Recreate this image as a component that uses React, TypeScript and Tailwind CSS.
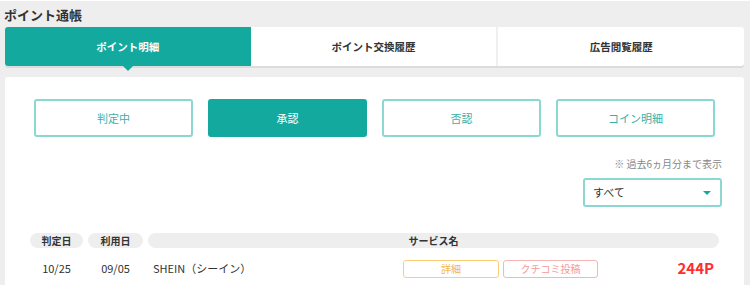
import React from 'react';

const font = { fontFamily: "'Noto Sans CJK JP', 'Noto Sans', sans-serif" };

const tabs = ['ポイント明細', 'ポイント交換履歴', '広告閲覧履歴'];
const filters = ['判定中', '承認', '否認', 'コイン明細'];

export default function App() {
  return (
    <div
      className="w-[750px] h-[285px] overflow-hidden bg-[#eeeeee] border-t border-white text-[#333]"
      style={font}
    >
      {/* Title */}
      <div className="h-[26px] pl-[4px] flex items-center">
        <h1 className="text-[13px] font-bold leading-none">ポイント通帳</h1>
      </div>

      <div className="pl-[5px] pr-[6px]">
        {/* Tabs */}
        <div className="flex h-[39px] rounded-[3px] shadow-[0_2px_0_#dcdcdc]">
          {tabs.map((t, i) => (
            <div
              key={t}
              className={
                i === 0
                  ? 'relative flex-1 flex items-center justify-center bg-[#14a99f] text-white text-[10.5px] font-bold rounded-l-[3px]'
                  : i === 1
                    ? 'flex-1 flex items-center justify-center bg-white text-[#333] text-[10.5px] font-bold border-r-2 border-[#efefef]'
                    : 'flex-1 flex items-center justify-center bg-white text-[#333] text-[10.5px] font-bold rounded-r-[3px]'
              }
            >
              {t}
              {i === 0 && (
                <span className="absolute left-1/2 -translate-x-1/2 top-full w-0 h-0 border-l-[5px] border-r-[5px] border-t-[5px] border-l-transparent border-r-transparent border-t-[#14a99f]" />
              )}
            </div>
          ))}
        </div>

        {/* Card */}
        <div className="mt-[11px] bg-white rounded-[3px] h-[300px]">
          <div className="grid grid-cols-4 gap-[15px] px-[29px] pt-[22px]">
            {filters.map((f) =>
              f === '承認' ? (
                <div
                  key={f}
                  className="h-[38px] flex items-center justify-center rounded-[3px] bg-[#14a99f] text-white text-[11px]"
                >
                  {f}
                </div>
              ) : (
                <div
                  key={f}
                  className="h-[38px] flex items-center justify-center rounded-[3px] border-2 border-[#8bd7d1] text-[#3bb0a8] text-[11px]"
                >
                  {f}
                </div>
              )
            )}
          </div>

          <div className="flex flex-col items-end pr-[22px] pt-[20px]">
            <p className="text-[10px] leading-[14px] text-[#888]">※ 過去6ヵ月分まで表示</p>
            <div className="mt-[7px] w-[139px] h-[29px] rounded-[3px] border-2 border-[#8bd7d1] flex items-center justify-between pl-[8px] pr-[9px]">
              <span className="text-[11px] text-[#333]">すべて</span>
              <span className="w-0 h-0 border-l-[4px] border-r-[4px] border-t-[4px] border-l-transparent border-r-transparent border-t-[#14a99f]" />
            </div>
          </div>

          {/* Table */}
          <div className="px-[25px] mt-[26px]">
            <div className="flex gap-[5px] h-[15px] text-[10px] font-bold">
              <div className="w-[53px] rounded-full bg-[#eeeeee] flex items-center justify-center">判定日</div>
              <div className="w-[55px] rounded-full bg-[#eeeeee] flex items-center justify-center">利用日</div>
              <div className="flex-1 rounded-full bg-[#eeeeee] flex items-center justify-center">サービス名</div>
            </div>

            <div className="flex items-center gap-[5px] h-[41px] text-[11px] text-[#333]">
              <div className="w-[53px] text-center">10/25</div>
              <div className="w-[55px] text-center">09/05</div>
              <div className="flex-1 flex items-center pl-[5px]">
                <span className="flex-1">SHEIN（シーイン）</span>
                <span className="w-[96px] h-[18px] flex items-center justify-center rounded-[3px] border border-[#fbcf7a] text-[#f5b541] text-[10px]">
                  詳細
                </span>
                <span className="ml-[4px] w-[95px] h-[18px] flex items-center justify-center rounded-[3px] border border-[#f8b4b4] text-[#f49a9a] text-[10px]">
                  クチコミ投稿
                </span>
                <span className="w-[121px] pr-[5px] text-right text-[15px] font-bold text-[#ff2d2d]">244P</span>
              </div>
            </div>
          </div>
        </div>
      </div>
    </div>
  );
}
